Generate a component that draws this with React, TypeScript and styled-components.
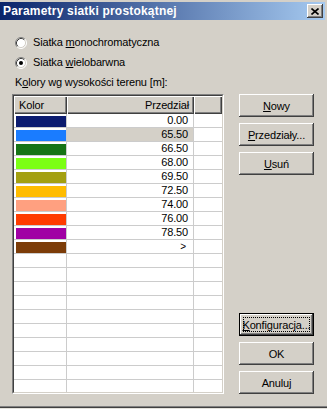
import React from "react"
import styled, { createGlobalStyle } from "styled-components"

const GlobalStyle = createGlobalStyle`
    html, body {
        margin: 0;
        padding: 0;
        background: #d4d0c8;
    }
    body {
        font-family: "Liberation Sans", Arial, sans-serif;
        font-size: 11px;
        letter-spacing: -0.15px;
        color: #000;
    }
`

const Window = styled.div`
    box-sizing: border-box;
    width: 327px;
    height: 409px;
    padding: 2px 2px 0 0;
    display: flex;
    flex-direction: column;
    background: #d4d0c8;
    box-shadow: inset 0 -1px #e4e2dc, inset 0 -2px #404040, inset 0 -3px #808080;
`

const TitleBar = styled.div`
    height: 18px;
    display: flex;
    align-items: center;
    background: linear-gradient(to right, #0a246a, #a6caf0);
`

const Title = styled.span`
    flex: 1;
    padding-left: 3px;
    font-size: 12px;
    font-weight: bold;
    letter-spacing: 0.2px;
    line-height: 18px;
    color: #fff;
    white-space: nowrap;
`

const CloseButton = styled.div`
    box-sizing: border-box;
    width: 16px;
    height: 14px;
    margin-right: 2px;
    display: flex;
    align-items: center;
    justify-content: center;
    background: #d4d0c8;
    box-shadow: inset -1px -1px #404040, inset 1px 1px #fff, inset -2px -2px #808080;
`

const Content = styled.div`
    flex: 1;
    display: flex;
    flex-direction: column;
    padding: 16px 0 15px 12px;
    min-height: 0;
`

const RadioRow = styled.label`
    height: 13px;
    margin-bottom: 7px;
    padding-left: 3px;
    display: flex;
    align-items: center;
    gap: 6px;
    line-height: 13px;
`

const Caption = styled.div`
    height: 13px;
    line-height: 13px;
    padding-left: 3px;
    margin-bottom: 5px;
`

const Main = styled.div`
    flex: 1;
    display: flex;
    gap: 15px;
    min-height: 0;
`

const GridOuter = styled.div`
    box-sizing: border-box;
    width: 212px;
    border: 1px solid;
    border-color: #808080 #fff #fff #808080;
    display: flex;
`

const GridInner = styled.div`
    flex: 1;
    border: 1px solid;
    border-color: #404040 #d4d0c8 #d4d0c8 #404040;
    background: #fff;
    overflow: hidden;
`

const Columns = styled.div`
    display: grid;
    grid-template-columns: 53px 127px 1fr;
`

const HeaderCell = styled.div<{ $align?: "left" | "right" }>`
    box-sizing: border-box;
    height: 18px;
    line-height: 18px;
    padding: 0 5px;
    text-align: ${p => p.$align || "left"};
    background: #d4d0c8;
    box-shadow: inset 1px 1px #fff, inset -1px -1px #404040, inset -2px -2px #808080;
`

const Cell = styled.div<{ $selected?: boolean; $last?: boolean }>`
    box-sizing: border-box;
    height: 14px;
    line-height: 13px;
    padding-right: 5px;
    text-align: right;
    border-bottom: 1px solid #cccccc;
    border-right: ${p => (p.$last ? "none" : "1px solid #cccccc")};
    background: ${p => (p.$selected ? "#d4d0c8" : "#fff")};
`

const SwatchCell = styled.div`
    box-sizing: border-box;
    height: 14px;
    padding: 2px 0 0 2px;
    border-bottom: 1px solid #cccccc;
    border-right: 1px solid #cccccc;
`

const Swatch = styled.div<{ $color: string }>`
    width: 50px;
    height: 11px;
    background: ${p => p.$color};
`

const Arrow = styled.span`
    font-size: 10px;
    padding-right: 2px;
`

const ButtonColumn = styled.div`
    width: 75px;
    display: flex;
    flex-direction: column;
    justify-content: space-between;
`

const ButtonGroup = styled.div`
    display: flex;
    flex-direction: column;
    gap: 6px;
`

const Button = styled.div<{ $default?: boolean }>`
    position: relative;
    box-sizing: border-box;
    width: 75px;
    height: 23px;
    display: flex;
    align-items: center;
    justify-content: center;
    background: #d4d0c8;
    font-size: 11px;
    box-shadow: ${p =>
        p.$default
            ? "inset 0 0 0 1px #000, inset -2px -2px #404040, inset 2px 2px #fff, inset -3px -3px #808080"
            : "inset -1px -1px #404040, inset 1px 1px #fff, inset -2px -2px #808080"};

    &::after {
        content: "";
        display: ${p => (p.$default ? "block" : "none")};
        position: absolute;
        inset: 4px;
        border: 1px dotted #000;
    }
`

function Radio({ checked }: { checked?: boolean }) {
    return (
        <svg width="12" height="12" viewBox="0 0 12 12">
            <circle cx="6" cy="6" r="5" fill="#fff" />
            <path d="M2.11 9.89 A5.5 5.5 0 0 1 9.89 2.11" stroke="#808080" fill="none" />
            <path d="M9.89 2.11 A5.5 5.5 0 0 1 2.11 9.89" stroke="#fff" fill="none" />
            <path d="M2.82 9.18 A4.5 4.5 0 0 1 9.18 2.82" stroke="#404040" fill="none" />
            <path d="M9.18 2.82 A4.5 4.5 0 0 1 2.82 9.18" stroke="#d4d0c8" fill="none" />
            {checked ? <circle cx="6" cy="6" r="2" fill="#000" /> : null}
        </svg>
    )
}

const ranges = [
    { color: "#0c1c70", value: "0.00" },
    { color: "#1a7cff", value: "65.50", selected: true },
    { color: "#167416", value: "66.50" },
    { color: "#7cff14", value: "68.00" },
    { color: "#a4a010", value: "69.50" },
    { color: "#ffbc00", value: "72.50" },
    { color: "#ffa080", value: "74.00" },
    { color: "#ff3c00", value: "76.00" },
    { color: "#a000a4", value: "78.50" },
    { color: "#7c3c08", value: ">" },
]

const EMPTY_ROWS = 10

export default function App() {
    return (
        <>
            <GlobalStyle />
            <Window>
                <TitleBar>
                    <Title>Parametry siatki prostokątnej</Title>
                    <CloseButton>
                        <svg width="8" height="7" viewBox="0 0 8 7">
                            <path d="M0.5 0.5 L7.5 6.5 M7.5 0.5 L0.5 6.5" stroke="#000" strokeWidth="1.6" />
                        </svg>
                    </CloseButton>
                </TitleBar>
                <Content>
                    <RadioRow>
                        <Radio />
                        <span>
                            Siatka <u>m</u>onochromatyczna
                        </span>
                    </RadioRow>
                    <RadioRow>
                        <Radio checked />
                        <span>
                            Siatka <u>w</u>ielobarwna
                        </span>
                    </RadioRow>
                    <Caption>
                        K<u>o</u>lory wg wysokości terenu [m]:
                    </Caption>
                    <Main>
                        <GridOuter>
                            <GridInner>
                                <Columns>
                                    <HeaderCell>Kolor</HeaderCell>
                                    <HeaderCell $align="right">Przedział</HeaderCell>
                                    <HeaderCell />
                                    {ranges.map(r => (
                                        <React.Fragment key={r.value}>
                                            <SwatchCell>
                                                <Swatch $color={r.color} />
                                            </SwatchCell>
                                            <Cell $selected={r.selected}>
                                                {r.value === ">" ? <Arrow>&gt;</Arrow> : r.value}
                                            </Cell>
                                            <Cell $last />
                                        </React.Fragment>
                                    ))}
                                    {Array.from({ length: EMPTY_ROWS }).map((_, i) => (
                                        <React.Fragment key={i}>
                                            <Cell />
                                            <Cell />
                                            <Cell $last />
                                        </React.Fragment>
                                    ))}
                                </Columns>
                            </GridInner>
                        </GridOuter>
                        <ButtonColumn>
                            <ButtonGroup>
                                <Button>
                                    <span>
                                        <u>N</u>owy
                                    </span>
                                </Button>
                                <Button>
                                    <span>
                                        <u>P</u>rzedziały...
                                    </span>
                                </Button>
                                <Button>
                                    <span>
                                        <u>U</u>suń
                                    </span>
                                </Button>
                            </ButtonGroup>
                            <ButtonGroup>
                                <Button $default>
                                    <span>
                                        <u>K</u>onfiguracja...
                                    </span>
                                </Button>
                                <Button>OK</Button>
                                <Button>Anuluj</Button>
                            </ButtonGroup>
                        </ButtonColumn>
                    </Main>
                </Content>
            </Window>
        </>
    )
}
